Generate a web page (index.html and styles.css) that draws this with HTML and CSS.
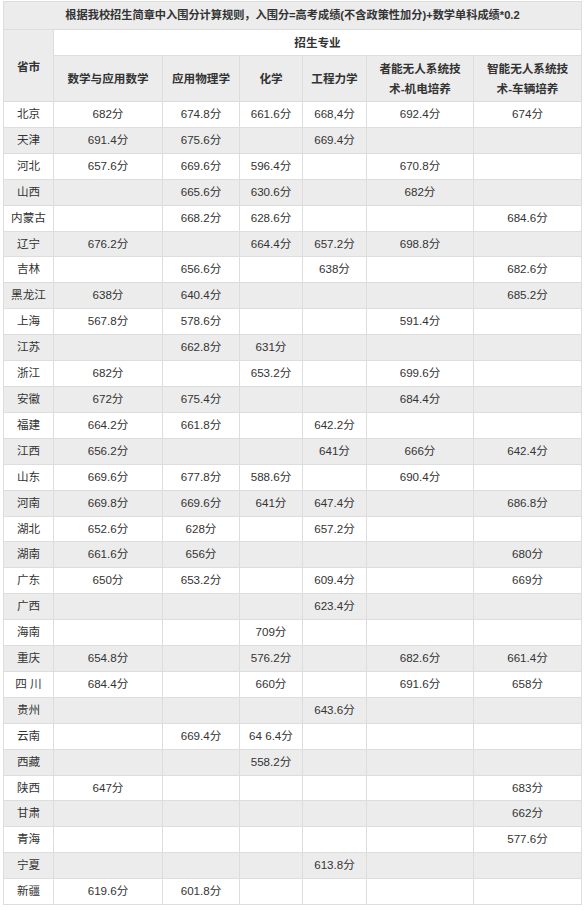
FILE: index.html
```html
<!DOCTYPE html>
<html lang="zh-CN">
<head>
<meta charset="utf-8">
<title>入围分</title>
<link rel="stylesheet" href="styles.css">
</head>
<body>
<table class="score">
  <colgroup>
    <col class="c-prov"><col class="c-math"><col class="c-phys"><col class="c-chem"><col class="c-eng"><col class="c-uav1"><col class="c-uav2">
  </colgroup>
  <thead>
    <tr class="title-row"><th colspan="7">根据我校招生简章中入围分计算规则，入围分=高考成绩(不含政策性加分)+数学单科成绩*0.2</th></tr>
    <tr class="group-row"><th rowspan="2" class="prov-head">省市</th><th colspan="6" class="group">招生专业</th></tr>
    <tr class="sub-row"><th>数学与应用数学</th><th>应用物理学</th><th>化学</th><th>工程力学</th><th>者能无人系统技<br>术-机电培养</th><th>智能无人系统技<br>术-车辆培养</th></tr>
  </thead>
  <tbody>
    <tr><td>北京</td><td>682分</td><td>674.8分</td><td>661.6分</td><td>668,4分</td><td>692.4分</td><td>674分</td></tr>
    <tr><td>天津</td><td>691.4分</td><td>675.6分</td><td></td><td>669.4分</td><td></td><td></td></tr>
    <tr><td>河北</td><td>657.6分</td><td>669.6分</td><td>596.4分</td><td></td><td>670.8分</td><td></td></tr>
    <tr><td>山西</td><td></td><td>665.6分</td><td>630.6分</td><td></td><td>682分</td><td></td></tr>
    <tr><td>内蒙古</td><td></td><td>668.2分</td><td>628.6分</td><td></td><td></td><td>684.6分</td></tr>
    <tr><td>辽宁</td><td>676.2分</td><td></td><td>664.4分</td><td>657.2分</td><td>698.8分</td><td></td></tr>
    <tr><td>吉林</td><td></td><td>656.6分</td><td></td><td>638分</td><td></td><td>682.6分</td></tr>
    <tr><td>黑龙江</td><td>638分</td><td>640.4分</td><td></td><td></td><td></td><td>685.2分</td></tr>
    <tr><td>上海</td><td>567.8分</td><td>578.6分</td><td></td><td></td><td>591.4分</td><td></td></tr>
    <tr><td>江苏</td><td></td><td>662.8分</td><td>631分</td><td></td><td></td><td></td></tr>
    <tr><td>浙江</td><td>682分</td><td></td><td>653.2分</td><td></td><td>699.6分</td><td></td></tr>
    <tr><td>安徽</td><td>672分</td><td>675.4分</td><td></td><td></td><td>684.4分</td><td></td></tr>
    <tr><td>福建</td><td>664.2分</td><td>661.8分</td><td></td><td>642.2分</td><td></td><td></td></tr>
    <tr><td>江西</td><td>656.2分</td><td></td><td></td><td>641分</td><td>666分</td><td>642.4分</td></tr>
    <tr><td>山东</td><td>669.6分</td><td>677.8分</td><td>588.6分</td><td></td><td>690.4分</td><td></td></tr>
    <tr><td>河南</td><td>669.8分</td><td>669.6分</td><td>641分</td><td>647.4分</td><td></td><td>686.8分</td></tr>
    <tr><td>湖北</td><td>652.6分</td><td>628分</td><td></td><td>657.2分</td><td></td><td></td></tr>
    <tr><td>湖南</td><td>661.6分</td><td>656分</td><td></td><td></td><td></td><td>680分</td></tr>
    <tr><td>广东</td><td>650分</td><td>653.2分</td><td></td><td>609.4分</td><td></td><td>669分</td></tr>
    <tr><td>广西</td><td></td><td></td><td></td><td>623.4分</td><td></td><td></td></tr>
    <tr><td>海南</td><td></td><td></td><td>709分</td><td></td><td></td><td></td></tr>
    <tr><td>重庆</td><td>654.8分</td><td></td><td>576.2分</td><td></td><td>682.6分</td><td>661.4分</td></tr>
    <tr><td>四 川</td><td>684.4分</td><td></td><td>660分</td><td></td><td>691.6分</td><td>658分</td></tr>
    <tr><td>贵州</td><td></td><td></td><td></td><td>643.6分</td><td></td><td></td></tr>
    <tr><td>云南</td><td></td><td>669.4分</td><td>64 6.4分</td><td></td><td></td><td></td></tr>
    <tr><td>西藏</td><td></td><td></td><td>558.2分</td><td></td><td></td><td></td></tr>
    <tr><td>陕西</td><td>647分</td><td></td><td></td><td></td><td></td><td>683分</td></tr>
    <tr><td>甘肃</td><td></td><td></td><td></td><td></td><td></td><td>662分</td></tr>
    <tr><td>青海</td><td></td><td></td><td></td><td></td><td></td><td>577.6分</td></tr>
    <tr><td>宁夏</td><td></td><td></td><td></td><td>613.8分</td><td></td><td></td></tr>
    <tr><td>新疆</td><td>619.6分</td><td>601.8分</td><td></td><td></td><td></td><td></td></tr>
  </tbody>
</table>
</body>
</html>
```

FILE: styles.css
```css
html, body {
  margin: 0;
  padding: 0;
  background: #fff;
}
body {
  padding: 1px 0 0 3px;
  font-family: "Liberation Sans", "Noto Sans CJK SC", sans-serif;
  font-size: 11.6px;
  color: #333;
}
.score {
  border-collapse: collapse;
  table-layout: fixed;
  width: 579px;
}
.c-prov { width: 50px; }
.c-math { width: 109px; }
.c-phys { width: 77px; }
.c-chem { width: 63px; }
.c-eng { width: 64px; }
.c-uav1 { width: 107px; }
.c-uav2 { width: 108px; }
.score th,
.score td {
  border: 1px solid #dddddd;
  padding: 0;
  text-align: center;
  vertical-align: middle;
  white-space: nowrap;
}
.score th {
  font-weight: bold;
  background: #ececec;
}
.title-row th {
  line-height: 27px;
  font-size: 11.2px;
}
.group-row .group {
  background: #fff;
  line-height: 25px;
}
.sub-row th {
  line-height: 20px;
  padding: 3px 0 2px;
}
.score td {
  line-height: 24.9px;
  font-weight: normal;
}
.score tbody tr:nth-child(even) td {
  background: #ececec;
}
```
